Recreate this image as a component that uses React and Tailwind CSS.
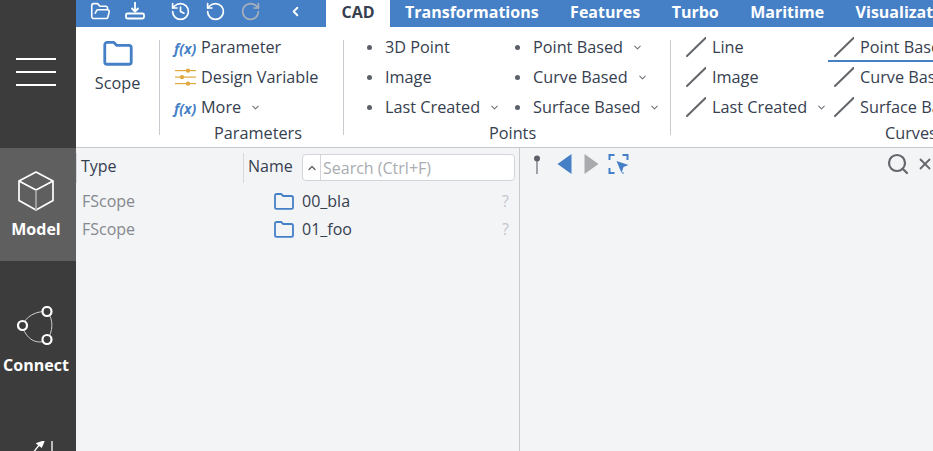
import React from "react";
import { ChevronDown, ChevronUp, ChevronLeft, FolderOpen, History, RotateCcw, RotateCw, Search, X } from "lucide-react";

const Folder = ({ className, sw = 1.6 }) => (
  <svg viewBox="0 0 20 17" className={className} fill="none" stroke="#4580c7" strokeWidth={sw} strokeLinejoin="round">
    <path d="M1 14.2V2.6C1 1.7 1.7 1 2.6 1h4.6l2 2h8.2c.9 0 1.6.7 1.6 1.6v9.6c0 .9-.7 1.6-1.6 1.6H2.6C1.7 15.8 1 15.100 1 14.200z" />
  </svg>
);

const Fx = () => (
  <span className="w-[26px] shrink-0 text-[14px] font-bold italic text-[#4580c7] leading-none pt-[3px] ml-[-1px] mr-[1px]">f(x)</span>
);

const Sliders = () => (
  <svg viewBox="0 0 21 18" className="w-[21px] h-[18px] mr-[5px] shrink-0" fill="#dfa93f">
    <rect x="0" y="2" width="21" height="1.200" />
    <rect x="0" y="8.500" width="21" height="1.200" />
    <rect x="0" y="15" width="21" height="1.200" />
    <circle cx="13" cy="2.600" r="2.200" />
    <circle cx="7" cy="9.100" r="2.200" />
    <circle cx="13" cy="15.600" r="2.200" />
  </svg>
);

const Dot = () => <span className="w-[5px] h-[5px] rounded-full bg-[#5c6068] shrink-0 ml-[-2px] mr-[13px]" />;

const Slash = () => (
  <svg viewBox="0 0 20 20" className="w-[20px] h-[20px] shrink-0 mr-[6px]" stroke="#63666b" strokeWidth="2" strokeLinecap="round">
    <line x1="1" y1="19" x2="19.500" y2="1" />
  </svg>
);

const Chev = ({ ml }) => <ChevronDown size={11} strokeWidth={2.200} className={`text-[#6b6f76] shrink-0 ${ml}`} />;

const Row = ({ icon, label, chev }) => (
  <div className="h-[30px] flex items-center whitespace-nowrap">
    {icon}
    <span>{label}</span>
    {chev && <Chev ml={chev} />}
  </div>
);

const Label = ({ children, className }) => (
  <div className={`h-[22px] leading-[22px] whitespace-nowrap ${className}`}>{children}</div>
);

function Sidebar() {
  return (
    <aside className="w-[76px] shrink-0 bg-[#3c3c3c] text-white flex flex-col overflow-hidden h-[451px]">
      <div className="h-[148px] shrink-0 flex flex-col items-center pr-[4px] pt-[58px] gap-[11px]">
        <div className="w-[40px] h-[2px] bg-white" />
        <div className="w-[40px] h-[2px] bg-white" />
        <div className="w-[40px] h-[2px] bg-white" />
      </div>
      <div className="h-[113px] shrink-0 mb-[22px] bg-[#5f5f5f] flex flex-col items-center pr-[4px] pt-[23px]">
        <svg viewBox="0 0 38 40" className="w-[38px] h-[40px]" fill="none" stroke="#fff" strokeWidth="1.700" strokeLinejoin="round">
          <path d="M19 1 L36 10 V29.500 L19 39 L2 29.500 V10 Z" />
          <path d="M2 10 L19 19 L36 10" />
          <path d="M19 19 V39" stroke="#aaa" />
        </svg>
        <span className="font-bold text-[16px] leading-[20px] mt-[8px]">Model</span>
      </div>
      <div className="h-[113px] shrink-0 mb-[22px] flex flex-col items-center pr-[4px] pt-[23px]">
        <svg viewBox="0 0 40 40" className="w-[40px] h-[40px]" fill="none">
          <path d="M31 5.500 C38 13 37 26 31 34 C24 38 12 37 6 20 C10 10 20 5 31 5.500Z" stroke="#cfcfcf" strokeWidth="1" />
          <circle cx="31" cy="5.500" r="4.500" fill="#3c3c3c" stroke="#fff" strokeWidth="2.200" />
          <circle cx="31" cy="33.500" r="4.500" fill="#3c3c3c" stroke="#fff" strokeWidth="2.200" />
          <circle cx="6.500" cy="19.500" r="4.500" fill="#3c3c3c" stroke="#fff" strokeWidth="2.200" />
        </svg>
        <span className="font-bold text-[16px] leading-[20px] mt-[9px]">Connect</span>
      </div>
      <div className="shrink-0 flex justify-center pr-[4px] pt-[23px]">
        <svg viewBox="0 0 40 20" className="w-[40px] h-[20px]" fill="none" stroke="#fff" strokeWidth="1.300">
          <path d="M12 18 L24 3" />
          <path d="M28 0 L21 2.500 L25.500 6 Z" fill="#fff" />
          <path d="M36 0 V20" />
        </svg>
      </div>
    </aside>
  );
}

function TopBar() {
  const tabs = ["Transformations", "Features", "Turbo", "Maritime", "Visualization"];
  return (
    <div className="h-[27px] flex shrink-0 bg-[#4580c7] overflow-hidden">
      <div className="w-[250px] shrink-0 flex items-center text-white pl-[14px] pb-[5px]">
        <FolderOpen size={21} strokeWidth={1.800} />
        <svg viewBox="0 0 20 20" className="w-[20px] h-[20px] ml-[14px]" fill="none" stroke="#fff" strokeWidth="1.800" strokeLinejoin="round">
          <path d="M10 1 V10 M6.500 7 L10 10.500 L13.500 7" />
          <rect x="1" y="12.500" width="18" height="5" rx="1.500" />
        </svg>
        <History size={21} strokeWidth={1.900} className="ml-[25px]" />
        <RotateCcw size={21} strokeWidth={1.900} className="ml-[14px]" />
        <RotateCw size={21} strokeWidth={1.900} className="ml-[14px] text-[#a9b0ba]" />
        <ChevronLeft size={15} strokeWidth={3} className="ml-[27px]" />
      </div>
      <div className="w-[64px] shrink-0 bg-white flex items-center justify-center font-bold text-[16px] text-[#36404f] pb-[3px]">CAD</div>
      <div className="flex items-center text-white font-bold text-[16px] whitespace-nowrap pl-[15px] gap-[31.5px] pb-[3px]">
        {tabs.map((t) => <span key={t}>{t}</span>)}
      </div>
    </div>
  );
}

function Ribbon() {
  return (
    <div className="h-[121px] shrink-0 bg-white border-b border-[#c8cad0] flex text-[16.25px] text-[#36404f] overflow-hidden pt-[5px]">
      <div className="w-[83px] shrink-0 flex flex-col items-center pt-[9px]">
        <Folder className="w-[30px] h-[25px]" sw={1.9} />
        <span className="mt-[5px] leading-[24px]">Scope</span>
      </div>
      <div className="w-px h-[95px] mt-[8px] bg-[#c8cad0] shrink-0" />
      <div className="w-[183px] shrink-0 pl-[15px]">
        <Row icon={<Fx />} label="Parameter" />
        <Row icon={<Sliders />} label="Design Variable" />
        <Row icon={<Fx />} label="More" chev="ml-[9px]" />
        <Label className="pl-[39px]">Parameters</Label>
      </div>
      <div className="w-px h-[95px] mt-[8px] bg-[#c8cad0] shrink-0" />
      <div className="w-[326px] shrink-0 pl-[25px]">
        <div className="flex">
          <div className="w-[148px] shrink-0">
            <Row icon={<Dot />} label="3D Point" />
            <Row icon={<Dot />} label="Image" />
            <Row icon={<Dot />} label="Last Created" chev="ml-[9px]" />
          </div>
          <div>
            <Row icon={<Dot />} label="Point Based" chev="ml-[9px]" />
            <Row icon={<Dot />} label="Curve Based" chev="ml-[9px]" />
            <Row icon={<Dot />} label="Surface Based" chev="ml-[9px]" />
          </div>
        </div>
        <Label className="pl-[120px]">Points</Label>
      </div>
      <div className="w-px h-[95px] mt-[8px] bg-[#c8cad0] shrink-0" />
      <div className="pl-[15px] flex-1 min-w-0">
        <div className="flex">
          <div className="w-[148px] shrink-0">
            <Row icon={<Slash />} label="Line" />
            <Row icon={<Slash />} label="Image" />
            <Row icon={<Slash />} label="Last Created" chev="ml-[9px]" />
          </div>
          <div className="relative">
            <Row icon={<Slash />} label="Point Based" />
            <Row icon={<Slash />} label="Curve Based" />
            <Row icon={<Slash />} label="Surface Based" />
            <div className="absolute left-[-6px] top-[28px] h-[2px] w-[140px] bg-[#4580c7]" />
          </div>
        </div>
        <Label className="pl-[199px]">Curves</Label>
      </div>
    </div>
  );
}

function TreeRow({ name }) {
  return (
    <div className="h-[28px] flex items-center text-[16px]">
      <span className="w-[192px] pl-[6px] text-[#85888e]">FScope</span>
      <Folder className="w-[20px] h-[17px] ml-[6px] mr-[8px] shrink-0" sw={1.8} />
      <span className="text-[#36404f] flex-1">{name}</span>
      <span className="text-[#c4c6ca] mr-[10px]">?</span>
    </div>
  );
}

function LeftPanel() {
  return (
    <section className="w-[444px] shrink-0 border-r border-[#c8cad0]">
      <div className="h-[38px] flex items-center text-[16px] text-[#36404f] pt-[1px]">
        <div className="w-[167px] h-[30px] shrink-0 border-l border-[#d6d8dc] pl-[4px] pb-[4px] flex items-center">Type</div>
        <div className="w-[59px] h-[30px] shrink-0 border-l border-[#d6d8dc] pl-[4px] pb-[4px] flex items-center">Name</div>
        <div className="w-[213px] h-[27px] shrink-0 flex items-center bg-white border border-[#d3d5da] rounded-[4px] overflow-hidden">
          <span className="w-[18px] h-full border-r border-[#d3d5da] flex items-center justify-center shrink-0">
            <ChevronUp size={12} strokeWidth={2.500} className="text-[#5b5f66]" />
          </span>
          <span className="pl-[2px] text-[#a9acb1] whitespace-nowrap">Search (Ctrl+F)</span>
        </div>
      </div>
      <div className="pt-[1px]">
        <TreeRow name="00_bla" />
        <TreeRow name="01_foo" />
      </div>
    </section>
  );
}

function RightPanel() {
  return (
    <section className="flex-1 min-w-0 flex items-start pt-[6px] pl-[13px]">
      <svg viewBox="0 0 8 20" className="w-[8px] h-[20px] shrink-0">
        <rect x="3.200" y="5" width="1.600" height="15" fill="#8b8e93" />
        <circle cx="4" cy="4.500" r="3" fill="#5c6068" />
      </svg>
      <svg viewBox="0 0 14 20" className="w-[15px] h-[20px] ml-[16px] shrink-0"><path d="M14 0 V20 L0 10 Z" fill="#4580c7" /></svg>
      <svg viewBox="0 0 14 20" className="w-[15px] h-[20px] ml-[12px] shrink-0"><path d="M0 0 V20 L14 10 Z" fill="#a8aaad" /></svg>
      <svg viewBox="0 0 20 20" className="w-[21px] h-[20px] ml-[9px] shrink-0" fill="none" stroke="#4580c7" strokeWidth="2">
        <path d="M1 6 V1 H6 M14 1 H19 V6 M1 14 V19 H6 M14 19 H15" />
        <path d="M8 7 L20 11 L15 13 L13 19 Z" fill="#4580c7" stroke="none" />
      </svg>
      <div className="ml-auto flex items-center gap-[6px] mt-[-2px]">
        <Search size={24} strokeWidth={2.200} className="text-[#63666b]" />
        <X size={18} strokeWidth={2.400} className="text-[#63666b] mr-[-1px]" />
      </div>
    </section>
  );
}

export default function App() {
  return (
    <div className="w-[933px] h-[451px] flex overflow-hidden bg-[#f3f4f6] font-['Open_Sans',sans-serif]">
      <Sidebar />
      <main className="flex-1 min-w-0 flex flex-col">
        <TopBar />
        <Ribbon />
        <div className="flex-1 flex min-h-0">
          <LeftPanel />
          <RightPanel />
        </div>
      </main>
    </div>
  );
}
